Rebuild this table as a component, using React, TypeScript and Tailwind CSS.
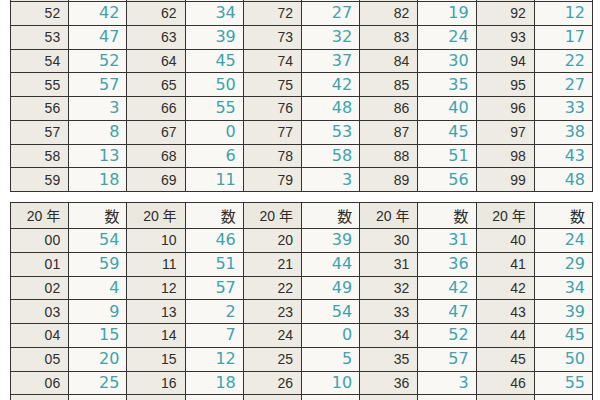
import React from "react";

type Row = [string, number][];

const t1: number[][] = [
  [42, 34, 27, 19, 12],
  [47, 39, 32, 24, 17],
  [52, 45, 37, 30, 22],
  [57, 50, 42, 35, 27],
  [3, 55, 48, 40, 33],
  [8, 0, 53, 45, 38],
  [13, 6, 58, 51, 43],
  [18, 11, 3, 56, 48],
];

const t2: number[][] = [
  [54, 46, 39, 31, 24],
  [59, 51, 44, 36, 29],
  [4, 57, 49, 42, 34],
  [9, 2, 54, 47, 39],
  [15, 7, 0, 52, 45],
  [20, 12, 5, 57, 50],
  [25, 18, 10, 3, 55],
  [30, 23, 15, 8, 0],
];

function buildRows(firstDecade: number, startUnit: number, vals: number[][]): Row[] {
  return vals.map((r, i) =>
    r.map((v, j) => [`${firstDecade + j}${startUnit + i}`, v] as [string, number])
  );
}

const line = "border-[#333333]";

function Table({ header, rows, className }: { header: string | null; rows: Row[]; className?: string }) {
  const headerCells = [0, 1, 2, 3, 4];
  return (
    <div className={`w-[583px] ml-[10px] border-t border-l ${line} ${className ?? ""}`}>
      <div className="grid grid-cols-10 h-[26px]">
        {headerCells.map((k) => (
          <React.Fragment key={k}>
            <div className={`flex items-center justify-end pr-[8px] border-r border-b ${line} bg-[#ebe8e0] text-[#2b2b2b] text-[14px] leading-none font-['Liberation_Sans','Noto_Sans_CJK_JP',sans-serif]`}>
              {header}
            </div>
            <div className={`flex items-center justify-end pr-[7px] border-r border-b ${line} bg-[#f8f7f3] text-[#2b2b2b] text-[15px] leading-none font-['Noto_Sans_CJK_JP',sans-serif]`}>
              {header ? "数" : null}
            </div>
          </React.Fragment>
        ))}
      </div>
      {rows.map((r, i) => (
        <div key={i} className="grid grid-cols-10 h-[23.75px]">
          {r.map(([y, v], j) => (
            <React.Fragment key={j}>
              <div className={`flex items-center justify-end pr-[8px] border-r border-b ${line} bg-[#eeebe4] text-[#2e2e2e] text-[14px] leading-none font-['Liberation_Sans',sans-serif]`}>
                {y}
              </div>
              <div className={`flex items-center justify-end pr-[7px] border-r border-b ${line} bg-[#f9f8f5] text-[#3ea3ad] text-[16px] leading-none font-['DejaVu_Sans',sans-serif]`}>
                {v}
              </div>
            </React.Fragment>
          ))}
        </div>
      ))}
    </div>
  );
}

export default function App() {
  const rows1 = buildRows(5, 2, t1);
  const rows2 = buildRows(0, 0, t2);
  return (
    <div className="w-[600px] h-[400px] overflow-hidden bg-white">
      <Table header={null} rows={rows1} className="-mt-[25px]" />
      <Table header="20 年" rows={rows2} className="mt-[10px]" />
    </div>
  );
}
